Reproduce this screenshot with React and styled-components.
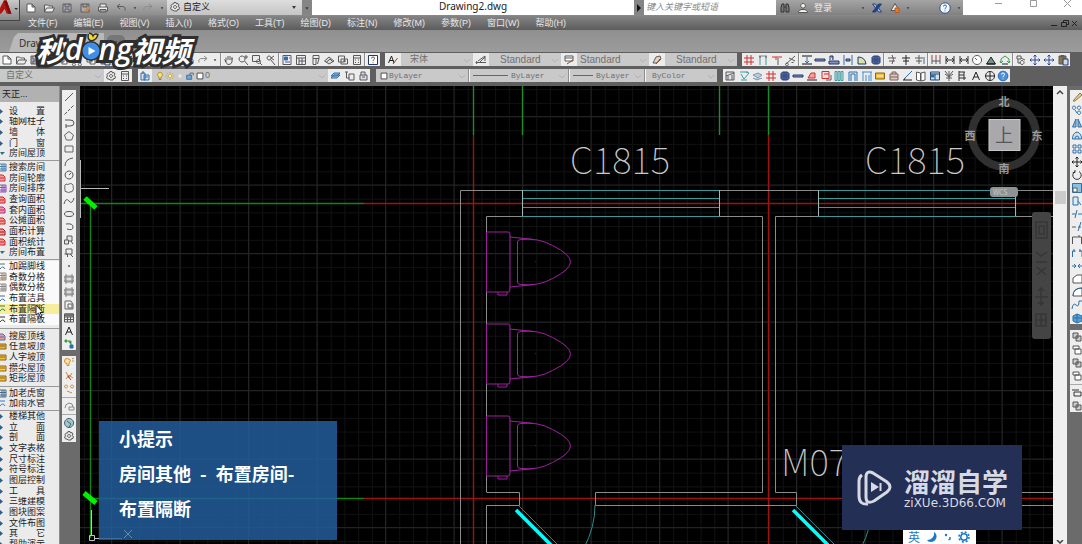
import React from "react";
import styled, { createGlobalStyle } from "styled-components";

const GlobalStyle = createGlobalStyle`
  * {
    box-sizing: border-box;
  }

  body {
    margin: 0;
    overflow: hidden;
    background: #5c5c5c;
    font-family: "Liberation Sans", "Noto Sans CJK SC", sans-serif;
  }

  button,
  input,
  select {
    margin: 0;
    padding: 0;
    border: 0;
    border-radius: 0;
    background: none;
    color: inherit;
    font: inherit;
  }
`;

/* ---------- icons ---------- */

const K = "#5a5a5a";
const B = "#2f6fa8";
const R = "#cf3030";
const N = "#23396e";
const T = "#3f9aa0";
const G = "#3d9c4a";
const O = "#d08a3a";

// every shape is [path, stroke, fill] on a 12 x 12 board
const shapes = {
  new: [["M2 2h5l3 3v5H2zM7 2v3h3", K, "#fff"]],
  open: [["M1.5 10V3h3l1 1h4v2M1.5 10l2-4h8l-2 4z", K, "#eee"]],
  save: [["M2 2h8v8H2zM4 2v3h4V2M4 10V7h4v3", K, "#aab"]],
  saveAs: [["M2 2h8v8H2zM4 2v3h4V2", K, "#aab"], ["M5 9l5-4 1 1-5 4z", O, O]],
  print: [["M3 5V2h6v3M1.5 5h9v4h-9zM3 7.5h6V10H3z", K, "#eee"]],
  undo: [["M5 2L2 4.500l3 2.500M2 4.500h5q4 0 3 4", K]],
  redo: [["M7 2l3 2.500L7 7M10 4.500H5q-4 0-3 4", "#8b8b8b"]],
  caret: [["M4 5h4L6 8z", "none", "#3a3a3a"]],
  cut: [["M3 2l5 6M9 2L4 8M4 9.500a1.500 1.500 0 1 1-.1-.1M10 9.500a1.500 1.500 0 1 1-.1-.1", K]],
  copy: [["M2 2h5v6H2zM5 4h5v6H5z", K, "#fff"]],
  gear: [["M5 1.500h2l.5 1.500 1.500-.500 1 1.500-1 1.500 1.500 1-.5 2-1.500 0-.5 1.500H5L4 9l-1.500 0-1-2 1-1-.5-1.500 1.200-1.500L4.500 3z", K, "#e8e8e8"], ["M6 4.500a1.500 1.500 0 1 0 .1 0", K]],
  hand: [["M3 7L1.500 5.500M3 8V3.500M5 6V2M7 6V2M9 6V3.500V8q-1 3-4 2.500Q3.500 10 2 6.500", K]],
  zoom: [["M5 2a3 3 0 1 0 .1 0M7.500 7l3.500 4M9 1v4M7 3h4", K]],
  zoomBox: [["M1.500 1.500h7v6h-7z", K], ["M7.500 5.500a2 2 0 1 0 .1 0M9 9l2 2", K]],
  zoomPrev: [["M4 2a2 2 0 1 0 .1 0M5.500 5.500L10 11M9 2L6 4l3 2", K]],
  props: [["M2 1.500h8v9H2z", K, "#eef"], ["M3.500 3h3v3h-3z", B, B], ["M4 8h5M8 4h1", K]],
  center: [["M1.500 1.500h9v9h-9zM1.500 4h9M4 4v6.500M7 4v6.500M4 7h6.500", K, "#eee"]],
  tool: [["M4 1.500h6v3H4zM7 4.500v6H4v-6M10 4.500L8.500 10", K, "#eee"]],
  sheet: [["M1.500 7L6 3l5 4-5 3zM3 8.500L7 5l3 3", K, "#ddd"]],
  markup: [["M1.500 2h6v6h-6zM4 5h6.500v5H4zM6 7h3", K, "#eee"]],
  calc: [["M2.500 1.500h7v9h-7zM2.500 4h7M4 6h1M7 6h1M4 8.500h1M7 8.500h1", K, "#eee"]],
  help: [["M1.500 1.500h9v9h-9z", N, "#fff"], ["M4.500 4.500q0-1.500 1.500-1.500t1.500 1.300Q7.500 5.500 6 6.500v.8M6 8.500v.8", K]],
  helpRound: [["M6 1.200a4.800 4.800 0 1 0 .1 0", "#2b67b8", "#4a90d8"], ["M4.500 4.500q0-1.500 1.500-1.500t1.500 1.300Q7.500 5.500 6 6.500v.8M6 8.500v.8", "#fff"]],
  helpLight: [["M6 .8a5.200 5.200 0 1 0 .1 0", "#2b4f88", "#f4f7fc"], ["M4.500 4.500q0-1.500 1.500-1.500t1.500 1.300Q7.500 5.500 6 6.500v.8M6 8.500v.8", "#2b67b8"]],
  textStyle: [["M1.500 9L4.500 2l2.500 7M2.500 6.500h4", "#222"], ["M6 10l4.500-6", "#8a4b2a"]],
  dimStyle: [["M1 8.500h10M2 7l-1 1.500L2 10M3 7l7-5v5", K], ["M5 8l5-5", "#8a4b2a"]],
  tableStyle: [["M2 2h8v5H2zM2 4h8", K, "#fff"], ["M4 10l6-4", "#8a4b2a"]],
  leader: [["M2 9l3-6 4-1 1 3-4 4z", K, "#e8d2be"], ["M5 10l4-5", "#8a4b2a"]],
  layers: [["M2 3h4v7H2zM5 5h5v5H5zM6 7h3", B, "#d5e4ef"], ["M4 1v3", K]],
  layerPrev: [["M2 6l3-3h6L8 6zM2 8l3-3h6L8 8z", B, "#9fc3dd"]],
  layerSet: [["M2 2h3M3.500 2v6h3M6 4h5v6H6z", K]],
  layerLock: [["M3 5h7v5H3zM4 5V2h4v3M5 7h3", K, "#dde"]],
  bulb: [["M6 1.500a3 3 0 0 0-1.500 5.500v1.500h3V7A3 3 0 0 0 6 1.500", "#a98a22", "#ffe25a"], ["M4.500 10h3", K]],
  sun: [["M6 4a2 2 0 1 0 .1 0M6 1v1.500M6 9.500V11M1 6h1.500M9.500 6H11M2.500 2.500l1 1M8.500 8.500l1 1M9.500 2.500l-1 1M3.500 8.500l-1 1", "#c79f2a", "#fff3a0"]],
  pale: [["M6 4a2 2 0 1 0 .1 0", "#ddd", "#e8e8e8"]],
  lock: [["M2 5h6v5H2z", B, "#6fa6cd"], ["M6 5V2.500h4V5", K]],
  square: [["M2.500 2.500h7v7h-7z", "#333", "#fff"]],
  axis: [["M4 1v10M8 1v10M1 4h10M1 8h10", R]],
  axisDim: [["M2 2h8M3 2v9M9 2v9", T], ["M3 2v2M9 2v2", R]],
  axisT: [["M1 3h10M5 3v3", R], ["M7 4v7", K]],
  scissors: [["M1 10L10 2M4 4l6 3M3 9.500a1.400 1.400 0 1 1-.1-.1M6.500 8.500h2", K]],
  beam: [["M1 2h10M1 10h10", "#111"], ["M6 3v5M4 7l2 2 2-2", B]],
  wall: [["M1 5h10v2H1z", N, "#8095b5"]],
  wallUp: [["M1 7h10v3H1zM2 2h3v4M2 2v4", N, "#8095b5"]],
  wallGap: [["M2 1v10M10 1v10", B], ["M4 5h4v2H4z", N, "#8095b5"]],
  door: [["M2 10V3q7 0 8 7z", N, "#d8e3a6"]],
  hatch: [["M3.500 2h5L10 3.500v5L8.500 10h-5L2 8.500v-5z", N, "#596ca0"], ["M5 2v8M7 2v8M2 5h8M2 7h8", "#334a85"]],
  stairs: [["M2 4h8M6 1q3 4 0 9M3 7h6", K]],
  stairsB: [["M1 4h8M5 1v9M2 7h6", K], ["M10 3v7", B]],
  plus: [["M2 4h8M6 1v10M3 7h6", "#222"]],
  dimRed: [["M2 3v7M6 3v7M10 3v7M2 7h8", K], ["M1 2h2M5 2h2M9 2h2", R]],
  dim: [["M2 2v8M10 2v8M2 6h8M4 4L2 6l2 2M8 4l2 2-2 2", "#333"]],
  clock: [["M6 1.500a4.500 4.500 0 1 0 .1 0", "#555", "#fff"], ["M6 6L4 4", B]],
  angle: [["M1.500 10h9L6 3z", "#222", "#7b8d8d"], ["M2 10h8", "#111"]],
  recycle: [["M2 9V5l4-3 4 3v4M4 7l-2 2-1-2M8 7l2 2 1-2", G], ["M3 10h6", "#222"]],
  find: [["M2 2h4v3H2zM6 4l4 2M7 6.500a2 2 0 1 0 .1 0M3 5v4h3", K]],
  cross: [["M6 1v10M1 6h10M4.500 2.500L6 1l1.500 1.500M4.500 9.500L6 11l1.500-1.500M2.500 4.500L1 6l1.500 1.500M9.500 4.500L11 6 9.500 7.500", "#2a4a96"]],
  paste: [["M2 2h7v8H2z", K, "#8b7748"], ["M6 5h5v6H6z", N, "#cdd7f2"], ["M4 1.500h3v1.500H4z", K]],
  plan: [["M2 2h8v8H2zM2 6l8-3M4 10V6M8 5v5", K, "#dfe6ec"]],
  planPen: [["M2 2h8M3 10h6M3 4l3 5 5-6M8 2l3 1", T]],
  cloud: [["M2 5l5-2 4 2-4 3zM2 8l4 2 5-2", "#7d98ae", "#bccbd6"]],
  roofRed: [["M2 8L5 3h4v5z", R, "#f0a2a2"], ["M1 10h10", "#222"]],
  frameRed: [["M2 1.500h7v7H2zM4 4h5", R, "#f9dcdc"], ["M6 10h5V5", K]],
  columns: [["M2 1.500h2v9H2zM5 1.500h2v9H5zM8 1.500h2v9H8z", T, "#c9e4ea"]],
  gate: [["M2 11V2h8v9M4 11V4h4v7", B, "#dcebf3"]],
  gateB: [["M1 2h10M2 2v9M5 5v6M8 5v6M10 2v9", "#3c8fd0"]],
  yellow: [["M1.500 3h9v6h-9z", "#8d6410", "#f3bd2f"], ["M3 6h6", "#fff"]],
  store: [["M2 4h8v6H2zM4 4V2h4v2M2 7h8", "#80625a", "#d7c9c3"]],
  pen: [["M3 8L10 1", B], ["M1 10h9M3 8l-1 2", "#222"]],
  book: [["M1.500 2l4 1v8l-4-1zM10 2L6 3v8l4-1z", K, "#fff"]],
  window: [["M1.500 2h9v8h-9zM1.500 4h9M6 4v6", "#1f4a78", "#cfe0ee"], ["M2 5h3v2H2z", B, B]],
  burst: [["M6 6L2 1M6 6l4-5M6 6v5M2 4l4 3 4-3M3 8h6M6 1v4", K]],
  levels: [["M3 1v10M3 2h6M3 5h5M3 8h7M8 2v8", "#333"]],
  letterA: [["M2.500 10L6 2l3.500 8M4 7h4", "#222"]],
  target: [["M6 1.500a4.500 4.500 0 1 0 .1 0M6 1.500v9M1.500 6h9", "#222"]],
  line: [["M2 10L10 2", K]],
  ray: [["M1.500 10.500L10.500 1.500", K], ["M4 8l1-1M7 5l1-1", "#eee"]],
  polyline: [["M2 3h5q4 0 4 3t-4 3H3M3 7v4", "#555"]],
  polygon: [["M6 1.500l4.500 3.500-1.800 5H3.300L1.500 5z", "#666"]],
  rect: [["M2 3h8v6H2z", "#666"]],
  arc: [["M2 10Q2 3 10 2", K]],
  circle: [["M6 2a4 4 0 1 0 .1 0M6 6l2-2", "#555"]],
  revcloud: [["M3 2q2 1 3 0 2-1 3 0 2 1 1 3 1 1 0 3 0 2-3 2-1 1-3 0-3 0-2-3-1-1 0-2-1-2 1-3", "#666"]],
  spline: [["M1 9q2-7 5-3t5-3", K]],
  ellipse: [["M6 3.500q4.500 0 4.500 2.500T6 8.500 1.500 6 6 3.500", "#555"]],
  ellArc: [["M3 3q7-1 7 3T4 8", "#555"]],
  insert: [["M1.500 6h4v4h-4zM4 6V2h5v5H6M8 7l2 3", K, "#e5e5e5"]],
  block: [["M3 2h6v5H3zM1.500 7h3v3M7 7l3 3", K, "#eee"]],
  point: [["M5.500 5.500h1v1h-1z", K]],
  gradient: [["M2 3h8v6H2zM3 1v10M9 1v10M1 4h10M1 8h10", "#888", "#ddd"]],
  region: [["M2 2h6l2 3v5H2zM5 5h4v4H5z", "#666"]],
  table: [["M1.500 2h9v8h-9zM1.500 5h9M1.500 7.500h9M4.500 5v5M7.500 5v5", K], ["M1.500 2h9v2h-9z", K, "#888"]],
  addSel: [["M2 2h2v2H2zM5 3h3v4", G, G], ["M7 7h3v3H7z", B, B]],
  bulbOrange: [["M4 1.500a2.500 2.500 0 0 0 0 5v2h2V6q2-2 1-3.500zM9 2l2-1M9 4h2", O, "#ffe5a6"]],
  brush: [["M3 2l3 6 3-5M3 9l3-4 4 3", O], ["M5 6l3 4", "#a33"]],
  nodes: [["M3 2a1.500 1.500 0 1 0 .1 0M9 2a1.500 1.500 0 1 0 .1 0M4 8l5 2", O]],
  cloudLock: [["M2 8q0-4 4-5 4 0 4 4M6 7h5v3H6z", "#888"]],
  globe: [["M6 1.500a4.500 4.500 0 1 0 .1 0", "#557", "#9cc"], ["M4 4l4 3-2 3", K]],
  erase: [["M2 10L9 2l2 2-7 6z", "#8a7a3a", "#e9c9a0"]],
  copyBlue: [["M3 2a1.700 1.700 0 1 0 .1 0M8 2a1.700 1.700 0 1 0 .1 0M8 7a1.700 1.700 0 1 0 .1 0M4 6l2 3", B]],
  mirror: [["M5 2v8H1.500zM7 2v8h3.500z", B, "#8fb7d6"]],
  offset: [["M1.500 9q0-6 4.500-7 4.500 1 4.500 7zM4 9q0-3 2-3t2 3", B, "#cfe0ec"]],
  array: [["M2 2h3v3H2zM7 2h3v3H7zM2 7h3v3H2zM7 7h3v3H7z", B]],
  move: [["M6 1v10M1 6h10M4.500 2.500L6 1l1.500 1.500M4.500 9.500L6 11l1.500-1.500M2.500 4.500L1 6l1.500 1.500M9.500 4.500L11 6 9.500 7.500", "#222"]],
  rotate: [["M8 2.500A4.200 4.200 0 1 1 4 2.500M4 1v2.500H1.800", "#333"]],
  scale: [["M1.500 1.500h9v9h-9z", B, "#8dc0dc"], ["M2 6h4v4H2z", K, "#fff"]],
  stretch: [["M2 2h5v8H2zM7 6l3 4", B, "#dcecf5"]],
  trim: [["M1 6h4M7 6h4M6 2L4 10", B]],
  extend: [["M1 6h4", K], ["M7 6h3M10 1L7 10", B]],
  break: [["M1.500 10V3h9v7M8 3V1", "#555"]],
  breakB: [["M1.500 10V4h3M8 4h3v6M3 2v3M9 2v3", B]],
  join: [["M1 6h4M7 6h4M3 4l2 2-2 2M9 4L7 6l2 2", B]],
  chamfer: [["M2 10V5l4-3h5v8z", "#555", "#fff"]],
  fillet: [["M2 10Q2 2 11 2v8z", "#555", "#fff"], ["M2 10Q2 2 11 2", B]],
  blend: [["M1 10q1-7 4-4t3-4h3", B]],
  explode: [["M2 4l4-2 5 2v5l-5 2-4-2zM6 2v9M2 6h9", B, "#5ba1d4"]],
  order: [["M2 2h5v5H2zM5 5h5v5H5z", "#555", "#ccc"]],
  orderB: [["M2 2h6v3H2zM4 5h6v5H4z", "#555", "#fff"]],
  textFront: [["M1 3h7M3 5h7v4H3z", "#333"]],
  binoculars: [["M2 10V5l1-3h2v8zM10 10V5L9 2H7v8zM5 5h2", "#333", "#777"]],
  person: [["M6 1.500a2.300 2.300 0 1 0 .1 0M1.500 10.500q0-3 4.500-3t4.500 3z", "#555", "#f3f3f3"]],
  exchange: [["M1.500 2h3l6 8h-3z", "#27427f", "#9dbae6"], ["M10.500 2l-3 0-6 8h3z", "#27427f", "#27427f"]],
  triangle: [["M6 1.500l4 7H2z", "#555", "#eee"], ["M6 6h4v4.500H6z", "#b45f20", "#e87b28"]],
};

const IconButton = styled.button`
  display: flex;
  flex: ${(p) => (p.$fluid ? "1 1 0" : "none")};
  align-items: center;
  justify-content: center;
  width: ${(p) => p.$w || 14}px;
  height: 13px;
  min-width: 0;

  svg {
    flex: none;
  }
`;

const Icon = ({ name, size = 12 }) => (
  <svg width={size} height={size} viewBox="0 0 12 12" aria-hidden="true">
    {shapes[name].map(([d, stroke, fill], i) => (
      <path key={i} d={d} stroke={stroke} fill={fill || "none"} strokeWidth="1" strokeLinejoin="round" />
    ))}
  </svg>
);

const Tool = ({ name, size, ...rest }) => (
  <IconButton type="button" aria-label={name} {...rest}>
    <Icon name={name} size={size} />
  </IconButton>
);

/* ---------- title bar ---------- */

const Window = styled.div`
  position: relative;
  display: flex;
  flex-direction: column;
  height: 100vh;
  overflow: hidden;
`;

const TitleBar = styled.header`
  display: flex;
  height: 15px;
  background: #fff;
`;

const AppButton = styled.button`
  position: absolute;
  left: 0;
  top: 0;
  z-index: 2;
  display: flex;
  align-items: center;
  width: 20px;
  height: 21px;
  overflow: hidden;
  border-right: 1px solid #444;
  border-bottom: 1px solid #444;
  background: linear-gradient(#c9c9c9, #8a8a8a);
`;

const QuickAccess = styled.div`
  display: flex;
  align-items: center;
  gap: 4px;
  padding-left: 24px;
  width: 167px;
  overflow: hidden;
  background: linear-gradient(#b4b4b4, #8d8d8d);
`;

const Workspace = styled.label`
  display: flex;
  align-items: center;
  width: 135px;
  padding: 0 2px 1px;
  gap: 2px;
  background: linear-gradient(#dedede, #c4c4c4);
  color: #222;
  font-size: 9px;
`;

const BareSelect = styled.select`
  flex: 1;
  min-width: 0;
  height: 13px;
  appearance: none;
  line-height: 13px;
`;

const Handle = styled.button`
  display: flex;
  align-items: center;
  justify-content: center;
  width: 10px;
  background: #858585;
`;

const FileName = styled.h1`
  flex: 1;
  margin: 0;
  padding-left: 0;
  color: #222;
  font: 400 10px/12px "Noto Sans", "Open Sans", sans-serif;
  text-align: center;
`;

const Search = styled.input`
  width: 132px;
  height: 14px;
  padding-left: 2px;
  background: #fff;
  color: #888;
  font-size: 9px;
  font-style: italic;

  &::placeholder {
    color: #888;
    opacity: 1;
  }
`;

const Account = styled.div`
  display: flex;
  align-items: center;
  width: 187px;
  padding: 0 2px;
  gap: 4px;
  overflow: hidden;
  background: linear-gradient(#a5a5a5, #808080);
  color: #eee;
  font-size: 9px;
`;

const Spacer = styled.span`
  flex: 1;
`;

const WindowButtons = styled.div`
  display: flex;
  align-items: flex-start;
  justify-content: space-between;
  width: 119px;
  padding: 0 9px 0 31px;
`;

const WindowButton = styled.button`
  display: flex;
  width: 10px;
  height: 9px;
`;

/* ---------- menu and tabs ---------- */

const MenuBar = styled.nav`
  display: flex;
  align-items: center;
  gap: 16px;
  height: 15px;
  padding: 0 2px 0 28px;
  border-top: 1px solid #888;
  background: linear-gradient(#848484, #5c5c5c);
  color: #e6e6e6;
  font-size: 9px;
  line-height: 13px;
  white-space: nowrap;

  a {
    color: inherit;
    text-decoration: none;
  }
`;

const DocButtons = styled.div`
  display: flex;
  margin-left: auto;
`;

const TabBar = styled.div`
  display: flex;
  align-items: flex-end;
  height: 22px;
  padding-left: 9px;
  background: linear-gradient(#8f8f8f, #9c9c9c);
`;

const DocTab = styled.button`
  width: 95px;
  height: 19px;
  padding-left: 10px;
  background: #b9b9b9;
  clip-path: polygon(0 100%, 5px 20%, 9px 0, 100% 0, 100% 100%);
  color: #333;
  font: 10px/18px "Noto Sans", "Open Sans", sans-serif;
  text-align: left;
`;

const NewTab = styled.button`
  width: 18px;
  height: 15px;
  margin: 0 0 2px 3px;
  border-radius: 5px 5px 8px 5px;
  background: #777;
  color: #444;
  font-size: 9px;
`;

/* ---------- tool strips ---------- */

const Strips = styled.div`
  display: flex;
  flex-direction: column;
  gap: 3px;
  height: 34px;
  padding-top: 1px;
  background: #5f5f5f;
`;

const StripRow = styled.div`
  display: flex;
  gap: ${(p) => p.$gap}px;
  height: 13px;
`;

const Strip = styled.div`
  display: flex;
  flex: none;
  align-items: center;
  width: ${(p) => p.$w}px;
  height: 13px;
  background: ${(p) => (p.$dim ? "#c6c6c6" : "#ececec")};
`;

const Split = styled.i`
  flex: none;
  width: 2px;
  height: 13px;
  border-left: 1px solid #8d8d8d;
  background: #f5f5f5;
`;

const comboSize = { mono: 8, cjk: 9, sans: 10 };

const Combo = styled.label`
  display: flex;
  align-items: center;
  flex: ${(p) => (p.$w ? "none" : 1)};
  width: ${(p) => p.$w || 0}px;
  height: 13px;
  padding-left: ${(p) => p.$pad || 3}px;
  background: #c9c9c9;
  color: #6f6f6f;
  font-size: ${(p) => comboSize[p.$face || "sans"]}px;
  font-family: ${(p) => (p.$face === "mono" ? '"Liberation Mono", monospace' : '"Liberation Sans", "Noto Sans CJK SC", sans-serif')};

  svg {
    flex: none;
  }
`;

const Chevron = () => (
  <svg width="11" height="8" viewBox="0 0 11 8" aria-hidden="true">
    <path d="M2 3l3 3 3-3" fill="none" stroke="#b2b2b2" />
  </svg>
);

const Dash = styled.i`
  width: ${(p) => p.$w}px;
  height: 1px;
  margin-right: 3px;
  background: #666;
`;

const Field = ({ label, value, children, ...rest }) => (
  <Combo {...rest}>
    {children}
    <BareSelect aria-label={label} defaultValue={value}>
      <option>{value}</option>
    </BareSelect>
    <Chevron />
  </Combo>
);

// "|" marks a divider
const Tools = ({ list, fluid }) =>
  list.split(" ").map((n, i) => (n === "|" ? <Split key={i} /> : <Tool key={i} name={n} $fluid={fluid} />));

/* ---------- work area ---------- */

const Work = styled.main`
  display: flex;
  flex: 1;
  min-height: 0;
`;

const Palette = styled.aside`
  flex: none;
  width: 60px;
  overflow: hidden;
  border-right: 1px solid #8b8b8b;
  background: #ebebeb;
`;

const PaletteTitle = styled.h2`
  height: 16px;
  margin: 0 0 4px;
  padding-left: 2px;
  background: #b1b1b1;
  color: #222;
  font-size: 9px;
  font-weight: 400;
  line-height: 16px;
`;

const Group = styled.div`
  display: grid;
  grid-template-rows: repeat(${(p) => p.$rows}, 1fr);
  height: ${(p) => p.$h}px;
  background: ${(p) => (p.$light ? "#fafafa" : "transparent")};
`;

const Rule = styled.hr`
  height: ${(p) => p.$h}px;
  margin: 0;
  border: 0;
  background: linear-gradient(#999, #999) center / 100% 1px no-repeat;
`;

const Item = styled.button`
  display: flex;
  align-items: center;
  gap: 2px;
  min-height: 0;
  overflow: hidden;
  background: ${(p) => (p.$on ? "#f6ee9c" : "transparent")};
  color: #1c1c1c;
  font-size: 9px;
  line-height: 11px;
  text-align: left;
  white-space: pre;
`;

const ItemMark = ({ kind, color }) => (
  <svg width="7" height="9" viewBox="0 0 7 9" aria-hidden="true">
    {kind === "more" && <path d="M0 2l3 2.500L0 7z" fill="#2d5f86" />}
    {kind === "down" && <path d="M0 3h5L2 6z" fill="#2d6f86" />}
    {kind === "red" && <path d="M0 2h3l2 2v4H0M0 5h4" fill="#f29a9a" stroke={color} />}
    {kind === "roof" && <path d="M0 2h6v5H0M0 4h5" fill={color} stroke="#8a6320" />}
    {kind === "grid" && <path d="M0 1h6v7H0M2 1v7M4 1v7M0 3.500h6M0 6h6" fill="none" stroke={color} />}
    {kind === "line" && <path d="M0 2h5M0 7q3-4 5 0" fill="none" stroke={color} />}
  </svg>
);

const groups = [
  { h: 53, after: 3, items: [["设　　置", "more"], ["轴网柱子", "more"], ["墙　　体", "more"], ["门　　窗", "more"], ["房间屋顶", "down"]] },
  {
    h: 96,
    after: 3,
    items: [
      ["搜索房间", "grid", "#4b81a8"],
      ["房间轮廓", "red", "#c33"],
      ["房间排序", "grid", "#8a4fb8"],
      ["查询面积", "red", "#d02020"],
      ["套内面积", "red", "#b02a86"],
      ["公摊面积", "red", "#d02020"],
      ["面积计算", "red", "#a01818"],
      ["面积统计", "red", "#d02020"],
      ["房间布置", "down"],
    ],
  },
  {
    h: 64,
    after: 6,
    light: true,
    items: [
      ["加踢脚线", "line", "#47748e"],
      ["奇数分格", "grid", "#9a8570"],
      ["偶数分格", "grid", "#888"],
      ["布置洁具", "line", "#3c6ab0"],
      ["布置隔断", "line", "#3e7a3e"],
      ["布置隔板", "line", "#333"],
    ],
  },
  {
    h: 53,
    after: 4,
    items: [
      ["搜屋顶线", "red", "#4e6fa8"],
      ["任意坡顶", "roof", "#e9b732"],
      ["人字坡顶", "roof", "#f1c232"],
      ["攒尖屋顶", "roof", "#ffcf30"],
      ["矩形屋顶", "roof", "#f1c232"],
    ],
  },
  { h: 21, after: 2, items: [["加老虎窗", "grid", "#4b6a88"], ["加雨水管", "line", "#2b7fd0"]] },
  {
    h: 139,
    items: ["楼梯其他", "立　　面", "剖　　面", "文字表格", "尺寸标注", "符号标注", "图层控制", "工　　具", "三维建模", "图块图案", "文件布图", "其　　它", "帮助演示"].map((t) => [t, "more"]),
  },
];

const Rail = styled.div`
  display: flex;
  flex: none;
  flex-direction: column;
  gap: 6px;
  width: ${(p) => p.$w}px;
  padding: 4px ${(p) => p.$right}px 0 ${(p) => p.$left}px;
  overflow: hidden;
  background: #6b6b6b;
`;

const RailGroup = styled.div`
  display: flex;
  flex-direction: column;
  align-items: flex-start;
  background: #eee;
`;

const RailSplit = styled.i`
  width: 100%;
  height: 4px;
  background: linear-gradient(#aaa, #aaa) center / 100% 1px no-repeat;
`;

const RailTools = ({ list }) => (
  <RailGroup>
    {list.split(" ").map((n, i) => (n === "|" ? <RailSplit key={i} /> : <Tool key={i} name={n} />))}
  </RailGroup>
);

const Canvas = styled.section`
  position: relative;
  flex: 1;
  min-width: 0;
  overflow: hidden;
  background: #000;
`;

const Plan = styled.svg`
  display: block;
  width: 100%;
  height: 100%;

  text {
    font-family: "Noto Sans CJK SC", sans-serif;
  }

  .tag {
    fill: #c9c9c9;
    font-size: 37px;
    font-weight: 100;
  }
`;

const Toilet = ({ y }) => (
  <g transform={`translate(486 ${y})`} fill="none" stroke="#a020a0">
    <path d="M.5 0H22q2 0 2 2v56q0 2-2 2H.5zM12 60v3h9v-3" />
    <path d="M24 5l24 2.500M24 55l24-2.500" />
    <path d="M31.500 10q0-2 3-2.500 18-2 32 6 18 9 18 16.500t-18 16.500q-14 8-32 6-3-.5-3-2.500z" />
    <path d="M49 29.500h1" opacity=".5" />
  </g>
);

const Door = ({ x }) => (
  <g fill="none">
    <path d={`M${x} 506l42 42`} stroke="#3a7f80" />
    <path d={`M${x - 3} 510l38 38`} stroke="#00ffff" strokeWidth="3.500" />
    <path d={`M${x + 76} 505q0 22-11 43`} stroke="#2f8a8c" />
  </g>
);

const WindowMark = ({ x }) => (
  <g fill="none">
    <path d={`M${x} 190.500h197M${x} 198.500h197M${x} 207.500h197M${x} 216.500h197`} stroke="#38999b" />
    <path d={`M${x + 0.5} 190v26M${x + 197.5} 190v26`} stroke="#9cb8b8" />
  </g>
);

const Drawing = () => (
  <Plan viewBox="80 86 973 458" preserveAspectRatio="xMinYMin slice" role="img" aria-label="plan">
    <defs>
      <pattern id="minor" x="111.500" y="116.500" width="13.700" height="13.700" patternUnits="userSpaceOnUse">
        <path d="M0 .5h13.700M.5 0v13.700" stroke="#101211" />
      </pattern>
      <pattern id="major" x="111" y="116" width="68.500" height="68.500" patternUnits="userSpaceOnUse">
        <path d="M0 .5h68.500M.5 0v68.500" stroke="#222424" />
      </pattern>
    </defs>
    <rect x="80" y="86" width="973" height="458" fill="url(#minor)" />
    <rect x="80" y="86" width="973" height="458" fill="url(#major)" />

    <path d="M473.500 135v410M768.500 135v410M364 203.500h690M364 498.500h690" stroke="#9a1414" strokeWidth="1.400" />
    <path d="M473.500 86v49M522.500 86v49M719.500 86v49M768.500 86v49" stroke="#1f8a2a" strokeWidth="1.400" />
    <path d="M80 203.500h284M90.500 203v335M90 498.500h274" stroke="#148414" strokeWidth="1.400" />
    <path d="M85 198l11 10M84 493l12 10" stroke="#00f000" strokeWidth="5" />

    <g fill="none" stroke="#8b8b8b">
      <path d="M460.500 545V190.500H522M720 190.500h98M1015 190.500h39" />
      <path d="M486.500 492V216.500h276V492.500H595.500v13H796.500v-13H775.500V216.500H1054" />
      <path d="M486.500 492.500h33v13h-33V545M1000 492.500h54M1000 505.500h54" />
    </g>
    <WindowMark x={522} />
    <WindowMark x={818} />
    <Toilet y={232} />
    <Toilet y={324} />
    <Toilet y={416} />
    <Door x={519} />
    <Door x={796} />

    <text className="tag" x="570" y="174">C1815</text>
    <text className="tag" x="865" y="174">C1815</text>
    <text className="tag" x="781" y="476">M07</text>

    <path d="M80 188.500h29M80.500 160v58" stroke="#b9b9b9" />
    <path d="M89.500 535.500h5v5h-5zM91.500 510v25M95 538.500h27" fill="none" stroke="#c5c5c5" />

    {/* view compass */}
    <circle cx="1004" cy="134.500" r="32" fill="none" stroke="#303030" strokeWidth="8" />
    <rect x="989" y="119.500" width="31" height="31" fill="#a9a9ab" stroke="#c5c5c5" />
    <text x="1004" y="142" fontSize="18" fill="#55585c" textAnchor="middle">上</text>
    <g fontSize="11" fontWeight="700" fill="#9c9c9c" textAnchor="middle">
      <text x="1004" y="106">北</text>
      <text x="1004" y="173">南</text>
      <text x="970" y="140">西</text>
      <text x="1037" y="140">东</text>
    </g>
    <rect x="990" y="187" width="28" height="10" rx="3" fill="#8f9396" />
    <text x="993" y="195" fontSize="7" fill="#c3c7c9">WCS</text>

    {/* navigation bar */}
    <rect x="1032" y="212" width="19" height="127" rx="3" fill="#444" />
    <g fill="none" stroke="#363636" strokeWidth="1.500">
      <path d="M1036 222h11v16h-11zM1039 226h5v8h-5z" />
      <path d="M1036 252l5 4 6-4M1036 262h11M1037 275l9-8M1037 267l9 8" />
      <path d="M1041 288v17M1035 297h13M1038 291l3-3 3 3M1038 302l3 3 3-3" />
      <path d="M1036 314h10v12h-10zM1036 320h10M1041 314v12" />
    </g>
  </Plan>
);

const Scroll = styled.div`
  display: flex;
  flex: none;
  flex-direction: column;
  align-items: center;
  justify-content: space-between;
  width: 14px;
  padding-top: 2px;
  background: #efefef;
`;

const Thumb = styled.span`
  width: 11px;
  height: 13px;
  margin-bottom: 242px;
  background: #cbcbcb;
`;

/* ---------- overlays ---------- */

const Brand = styled.div`
  position: absolute;
  left: 36px;
  top: 30px;
  display: flex;
  align-items: center;
  color: #fff;
  font: italic 700 29px/38px "Noto Sans CJK SC", sans-serif;
  -webkit-text-stroke: 6px #2e2e2e;
  paint-order: stroke fill;

  svg {
    position: relative;
    z-index: 1;
    margin: 0 -1px;
    overflow: visible;
  }
`;

const Latin = styled.span`
  font: italic 600 30px/38px "Open Sans", sans-serif;
`;

const Tip = styled.div`
  position: absolute;
  left: 19px;
  bottom: 4px;
  width: 238px;
  padding: 0 20px 14px;
  background: rgba(34, 93, 156, 0.85);
  color: #fff;
  font: 700 18px/35px "Noto Sans CJK SC", sans-serif;
  white-space: pre;

  p {
    margin: 0;
  }
`;

const Xmark = styled.svg`
  position: absolute;
  left: 24px;
  bottom: 1px;
`;

const Watermark = styled.div`
  position: absolute;
  right: 31px;
  bottom: 14px;
  display: flex;
  align-items: center;
  gap: 12px;
  width: 180px;
  height: 85px;
  padding-left: 15px;
  background: #232f55;
  color: #d7dae3;
`;

const WatermarkText = styled.div`
  font: 700 26px/30px "Noto Sans CJK SC", sans-serif;

  small {
    display: block;
    font: 12px/14px "DejaVu Sans", sans-serif;
  }
`;

const Ime = styled.div`
  position: absolute;
  right: 77px;
  bottom: 0;
  display: flex;
  align-items: center;
  gap: 6px;
  width: 73px;
  height: 14px;
  padding-left: 5px;
  background: #fff;
  color: #1c78c8;
  font: 12px/14px "Noto Sans CJK SC", sans-serif;
`;

const Pointer = styled.svg`
  position: absolute;
  left: 34px;
  top: 304px;
`;

const menus = ["文件(F)", "编辑(E)", "视图(V)", "插入(I)", "格式(O)", "工具(T)", "绘图(D)", "标注(N)", "修改(M)", "参数(P)", "窗口(W)", "帮助(H)"];

const App = () => {
  return (
    <Window>
      <GlobalStyle />
      <AppButton type="button" aria-label="menu">
        <svg width="20" height="20" viewBox="0 0 20 20">
          <path d="M-3 14L4 0h3l5 14H7L5 9l-4 5z" fill="#b3140f" />
          <path d="M4 0h3l5 14H9z" fill="#7c0d0a" />
          <path d="M15 8h4l-2 2z" fill="#333" />
        </svg>
      </AppButton>

      <TitleBar>
        <QuickAccess>
          {["new", "open", "save", "saveAs", "print", "undo"].map((n) => (
            <Tool key={n} name={n} />
          ))}
          <Tool name="caret" size={8} $w={5} />
          <Tool name="redo" />
          <Tool name="caret" size={8} $w={5} />
        </QuickAccess>
        <Workspace>
          <Icon name="gear" size={12} />
          <BareSelect aria-label="workspace" defaultValue="自定义">
            <option>自定义</option>
          </BareSelect>
          <Icon name="caret" size={12} />
        </Workspace>
        <Handle type="button" aria-label="customize">
          <Icon name="caret" size={12} />
        </Handle>
        <FileName>Drawing2.dwg</FileName>
        <Handle type="button" aria-label="expand search">
          <svg width="6" height="8" viewBox="0 0 6 8">
            <path d="M1 0l4 4-4 4z" fill="#111" />
          </svg>
        </Handle>
        <Search aria-label="search" placeholder="键入关键字或短语" />
        <Account>
          <Tool name="binoculars" />
          <Tool name="person" />
          <span>登录</span>
          <Spacer />
          <Tool name="caret" size={8} $w={6} />
          <Tool name="exchange" />
          <Tool name="triangle" />
          <Tool name="caret" size={8} $w={5} />
          <Spacer />
          <Tool name="helpLight" />
          <Tool name="caret" size={8} $w={5} />
        </Account>
        <WindowButtons>
          {["M1 3.5h7", "M1.500 .5h6v6h-6z", "M1 0l7 7M8 0L1 7"].map((d) => (
            <WindowButton key={d} type="button" aria-label="window">
              <svg width="10" height="9" viewBox="0 0 10 9">
                <path d={d} fill="none" stroke="#999" />
              </svg>
            </WindowButton>
          ))}
        </WindowButtons>
      </TitleBar>

      <MenuBar>
        {menus.map((m) => (
          <a key={m} href="#menu">
            {m}
          </a>
        ))}
        <DocButtons>
          {["M1 6.500h6", "M1.500 3.500h5v4h-5zM3.500 3V1.500h5v4H7", "M2 2l5 5M7 2L2 7"].map((d) => (
            <WindowButton key={d} type="button" aria-label="document">
              <svg width="10" height="9" viewBox="0 0 10 9">
                <path d={d} fill="none" stroke="#222" />
              </svg>
            </WindowButton>
          ))}
        </DocButtons>
      </MenuBar>

      <TabBar>
        <DocTab type="button">Draw</DocTab>
        <NewTab type="button" aria-label="new tab">
          <Icon name="caret" size={8} />
        </NewTab>
      </TabBar>

      <Strips>
        <StripRow $gap={5}>
          <Strip $w={380}>
            <Tools list="new open save print copy cut copy paste pen undo save print undo undo redo" />
            <Tool name="caret" size={8} $w={10} />
            <Tools list="| hand zoom zoomBox zoomPrev | props center tool sheet markup calc | help" />
          </Strip>
          <Strip $w={352}>
            <Tool name="textStyle" $w={16} />
            <Field label="text style" value="宋体" $w={72} $pad={9} $face="cjk" />
            <Tool name="dimStyle" $w={16} />
            <Field label="dimension style" value="Standard" $w={72} $pad={11} />
            <Tool name="tableStyle" $w={16} />
            <Field label="table style" value="Standard" $w={72} $pad={3} />
            <Tool name="leader" $w={16} />
            <Field label="leader style" value="Standard" $w={72} $pad={11} />
          </Strip>
          <Strip $w={328}>
            <Tools
              fluid
              list="axis axisDim axisT scissors | beam wall wallUp wallGap door hatch | stairs plus stairsB | dimRed dim dim clock angle recycle | find cross cross paste"
            />
          </Strip>
        </StripRow>
        <StripRow $gap={6}>
          <Strip $w={132}>
            <Field label="workspace" value="自定义" $pad={6} $face="cjk" />
            <Tools list="gear calc" />
          </Strip>
          <Strip $w={232}>
            <Tool name="layers" />
            <Field label="layer" value="0" $face="cjk">
              <Icon name="bulb" size={10} />
              <Icon name="sun" size={10} />
              <Icon name="pale" size={10} />
              <Icon name="lock" size={10} />
              <Icon name="square" size={10} />
            </Field>
            <Tools list="layerPrev layerSet layerLock" />
          </Strip>
          <Strip $w={341} $dim>
            <Field label="color" value="ByLayer" $w={92} $face="mono">
              <Icon name="square" size={10} />
            </Field>
            <Split />
            <Field label="linetype" value="ByLayer" $w={98} $face="mono">
              <Dash $w={35} />
            </Field>
            <Split />
            <Field label="lineweight" value="ByLayer" $w={74} $face="mono">
              <Dash $w={20} />
            </Field>
            <Split />
            <Field label="plot style" value="ByColor" $face="mono" $pad={6} />
          </Strip>
          <Strip $w={287}>
            <Tools
              fluid
              list="plan planPen cloud axis hatch wall roofRed frameRed columns gate gateB yellow store pen book window burst levels letterA target helpRound"
            />
          </Strip>
        </StripRow>
      </Strips>

      <Work>
        <Palette>
          <PaletteTitle>天正...</PaletteTitle>
          {groups.map((g, i) => (
            <React.Fragment key={i}>
              <Group $rows={g.items.length} $h={g.h} $light={g.light}>
                {g.items.map(([text, kind, color]) => (
                  <Item key={text} type="button" $on={text === "布置隔断"}>
                    <ItemMark kind={kind} color={color} />
                    {text}
                  </Item>
                ))}
              </Group>
              {g.after && <Rule $h={g.after} />}
            </React.Fragment>
          ))}
        </Palette>

        <Rail $w={20} $left={2} $right={4}>
          <RailTools list="line ray polyline polygon rect arc circle revcloud spline ellipse ellArc insert block point gradient gradient region table letterA addSel" />
          <RailTools list="bulbOrange brush nodes | cloudLock | globe gear" />
        </Rail>

        <Canvas>
          <Drawing />
          <Tip>
            <p>小提示</p>
            <p>房间其他&ensp;-&ensp;布置房间-</p>
            <p>布置隔断</p>
            <Xmark width="10" height="10" viewBox="0 0 10 10">
              <path d="M1 1l8 8M9 1L1 9" stroke="#6c8ba8" />
            </Xmark>
          </Tip>
          <Watermark>
            <svg width="35" height="38" viewBox="0 0 35 38" fill="none" stroke="#d7dae3">
              <path d="M9 8q0-7 7-4l14 9q6 5 0 10L17 32q-8 4-8-4z" strokeWidth="3" />
              <path d="M5 6Q2 8 2 12v15q0 9 9 8" strokeWidth="3" />
              <path d="M14 13l8 5-8 5z" fill="#d7dae3" stroke="none" />
              <path d="M23.500 14v8" strokeWidth="2" />
            </svg>
            <WatermarkText>
              溜溜自学
              <small>ziXUe.3D66.COM</small>
            </WatermarkText>
          </Watermark>
          <Ime>
            <span>英</span>
            <svg width="12" height="12" viewBox="0 0 12 12">
              <path d="M8 1q3 2 2.500 5.500Q9 11 4.500 11 2 11 1 9q4 0 6-3 1.500-2 1-5" fill="#1c78c8" />
            </svg>
            <svg width="8" height="12" viewBox="0 0 8 12">
              <circle cx="2" cy="4" r="1.200" fill="#1c78c8" />
              <path d="M6 6v2L4.500 9" stroke="#1c78c8" fill="none" strokeWidth="1.500" />
            </svg>
            <svg width="12" height="12" viewBox="0 0 12 12" fill="none" stroke="#1c78c8">
              <circle cx="6" cy="6" r="3.200" strokeWidth="1.500" />
              <circle cx="6" cy="6" r="5" strokeWidth="1.600" strokeDasharray="2 1.930" />
            </svg>
          </Ime>
        </Canvas>

        <Scroll>
          <svg width="8" height="8" viewBox="0 0 8 8">
            <path d="M1 6l3-3 3 3" fill="none" stroke="#444" strokeWidth="1.500" />
          </svg>
          <Thumb />
          <svg width="8" height="4" viewBox="0 0 8 4">
            <path d="M1 0l3 3 3-3" fill="none" stroke="#444" strokeWidth="1.500" />
          </svg>
        </Scroll>

        <Rail $w={15} $left={3} $right={0}>
          <RailTools list="erase copyBlue mirror offset array move rotate scale stretch trim extend break breakB join chamfer fillet blend explode" />
          <RailTools list="order orderB order orderB | textFront order" />
        </Rail>
      </Work>

      <Brand>
        <span>秒</span>
        <Latin>d</Latin>
        <svg width="18" height="18" viewBox="0 0 18 18">
          <circle cx="9" cy="11" r="10" fill="#2e2e2e" />
          <circle cx="9" cy="11" r="8.500" fill="#3f8fe8" />
          <path d="M6.500 7l7 4-7 4z" fill="#fff" />
          <path d="M7-6q3 0 4 4 1-4 4-3-1 4-5 5Q6 0 7-6" fill="#f6dd2c" stroke="#2e2e2e" strokeWidth="3" paintOrder="stroke" />
        </svg>
        <Latin>ng</Latin>
        <span>视频</span>
      </Brand>
      <Pointer width="11" height="14" viewBox="0 0 11 14">
        <path d="M2 1v10l2.500-2 2 4 1.500-1-2-3.500H9z" fill="#fff" stroke="#222" />
      </Pointer>
    </Window>
  );
};

export default App;
